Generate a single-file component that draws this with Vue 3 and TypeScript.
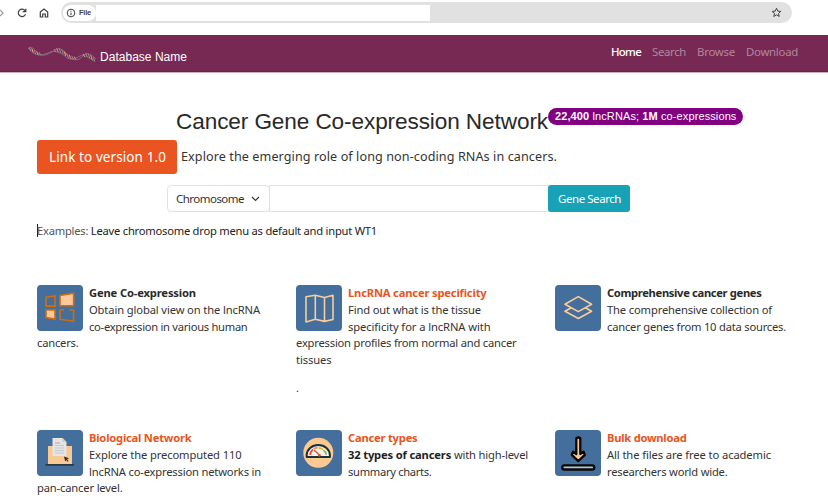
<script setup lang="ts">
import type { Directive } from 'vue'

interface Line { text: string; width: number; strong?: string }
interface Feature { icon: string; title: string; titleWidth: number; link: boolean; beside: Line[]; below: Line[]; note?: string }

// Tracks a line of text so that it fills the given measure in pixels.
const vFit: Directive<HTMLElement, number> = {
  mounted(el, { value }) {
    const count = (el.textContent ?? '').trim().length
    const natural = el.getBoundingClientRect().width
    if (count > 0) el.style.letterSpacing = `${((value - natural) / count).toFixed(4)}px`
  },
}

const nav = [
  { label: 'Home', width: 30, active: true },
  { label: 'Search', width: 34, active: false },
  { label: 'Browse', width: 38, active: false },
  { label: 'Download', width: 52, active: false },
]

const features: Feature[] = [
  {
    icon: 'windows', title: 'Gene Co-expression', titleWidth: 107, link: false,
    beside: [{ text: 'Obtain global view on the lncRNA', width: 171 }, { text: 'co-expression in various human', width: 158.5 }],
    below: [{ text: 'cancers.', width: 41.5 }],
  },
  {
    icon: 'map', title: 'LncRNA cancer specificity', titleWidth: 138.5, link: true,
    beside: [{ text: 'Find out what is the tissue', width: 133 }, { text: 'specificity for a lncRNA with', width: 142.5 }],
    below: [{ text: 'expression profiles from normal and cancer', width: 220.5 }, { text: 'tissues', width: 35.5 }],
    note: '.',
  },
  {
    icon: 'layers', title: 'Comprehensive cancer genes', titleWidth: 154.5, link: false,
    beside: [{ text: 'The comprehensive collection of', width: 165 }, { text: 'cancer genes from 10 data sources.', width: 179 }],
    below: [],
  },
  {
    icon: 'document', title: 'Biological Network', titleWidth: 102.5, link: true,
    beside: [{ text: 'Explore the precomputed 110', width: 152.5 }, { text: 'lncRNA co-expression networks in', width: 172 }],
    below: [{ text: 'pan-cancer level.', width: 85.5 }],
  },
  {
    icon: 'gauge', title: 'Cancer types', titleWidth: 69.5, link: true,
    beside: [{ strong: '32 types of cancers', text: ' with high-level', width: 180 }, { text: 'summary charts.', width: 83.5 }],
    below: [],
  },
  {
    icon: 'download', title: 'Bulk download', titleWidth: 79.5, link: true,
    beside: [{ text: 'All the files are free to academic', width: 164 }, { text: 'researchers world wide.', width: 120.5 }],
    below: [],
  },
]

// Rungs of the helix drawn in the brand mark: position, half height, colour.
const rungs: [number, number, number, string][] = [
  [3, 5, 1.8, '#a9a0a6'], [5.5, 6.5, 2, '#d9c466'], [8, 8.2, 2.2, '#d66c9d'], [10.5, 9.3, 2, '#c9b75d'], [13, 9.8, 1.6, '#78a07c'],
  [28, 6.6, 1.5, '#d66c9d'], [30.5, 6.3, 2, '#c9b75d'], [33, 6.6, 2.4, '#d66c9d'], [35.5, 7.6, 2.4, '#78a07c'], [38, 9.6, 2.2, '#e2cd6a'],
  [40.5, 11.5, 2.2, '#d66c9d'], [43, 12.8, 2, '#c9b75d'], [45.5, 13.6, 1.8, '#d66c9d'], [48, 14, 1.4, '#c9b75d'],
  [57, 11.4, 1.5, '#c9b75d'], [59.5, 11, 2, '#d66c9d'], [62, 12, 2.3, '#78a07c'], [64.5, 13.6, 2.4, '#c9b75d'], [67, 15.3, 2, '#78a07c'],
]
</script>

<template>
  <div class="page">
    <div class="toolbar">
      <svg class="forward" width="4" height="10" viewBox="0 0 4 10"><path d="M0 2l3 3-3 3" /></svg>
      <svg class="reload" width="12" height="12" viewBox="0 0 12 12"><path d="M9.5 7.2A3.7 3.7 0 1 1 9 3.6L9.7 4.5M9.8 1.7v3H6.7" /></svg>
      <svg class="home" width="12" height="12" viewBox="0 0 12 12"><path d="M2.3 5L6 2l3.7 3v5H7.3V7H4.7v3H2.3z" /></svg>
      <div class="address">
        <div class="chip">
          <svg width="10" height="10" viewBox="0 0 10 10"><circle cx="5" cy="5" r="3.8" /><path d="M5 4.5v2.7M5 2.7v1" /></svg>
          <b v-fit="12">File</b>
        </div>
        <div class="url"></div>
        <svg class="star" width="11" height="11" viewBox="0 0 11 11"><path d="M5.5 1.2l1.25 2.9 3.1.3-2.35 2.05.7 3-2.7-1.6-2.7 1.6.7-3L1.15 4.4l3.1-.3z" /></svg>
      </div>
    </div>

    <header class="navbar">
      <div class="brand">
        <svg class="dna" width="70" height="18" viewBox="0 0 70 18">
          <line v-for="r in rungs" :key="r[0]" :x1="r[0] - 0.8" :y1="r[1] - r[2]" :x2="r[0] + 0.8" :y2="r[1] + r[2]" :stroke="r[3]" />
          <path d="M1.500 4.500C4 1 8 6 11 9S18 12 24 8.500 31 3 36 6.500 41 14 47 15.500 55 12 58 10.300 64 10 69 15" />
          <path d="M1.500 4.500C5 9 10 12 16 10.500S24 7 28 7.500 35 9.500 39 13 48 15 52 12.500 58 12 62 14 65 17 68 17" />
        </svg>
        <span v-fit="87">Database Name</span>
      </div>
      <nav>
        <a v-for="item in nav" :key="item.label" v-fit="item.width" :class="{ active: item.active }">{{ item.label }}</a>
      </nav>
    </header>

    <main>
      <div class="headline">
        <h1 v-fit="372">Cancer Gene Co-expression Network</h1>
        <div class="badge"><span v-fit="181.5"><b>22,400</b> lncRNAs; <b>1M</b> co-expressions</span></div>
      </div>
      <div class="intro">
        <a class="version"><span v-fit="117">Link to version 1.0</span></a>
        <p v-fit="376">Explore the emerging role of long non-coding RNAs in cancers.</p>
      </div>
      <div class="search">
        <button class="select"><span v-fit="68">Chromosome</span>
          <svg width="9" height="6" viewBox="0 0 9 6"><path d="M1 1l3.5 3.5L8 1" /></svg>
        </button>
        <input type="text" aria-label="Gene" />
        <button class="submit"><span v-fit="63">Gene Search</span></button>
      </div>
      <div class="examples"><i></i><span v-fit="340">Examples: <em>Leave chromosome drop menu as default and input WT1</em></span></div>

      <section class="features">
        <article v-for="f in features" :key="f.title">
          <div class="top">
            <svg class="tile" viewBox="0 0 46 46" width="46" height="46">
              <g v-if="f.icon === 'windows'" class="windows">
                <path d="M9 12.200l9-1.300v10.200H9z" />
                <path class="fill" d="M23 10.500l13.600-2.200v12.500H23z" />
                <path class="fill" d="M9 25h9v9l-9-1.400z" />
                <path d="M27 25h-4v9.300l13.600 1.900V25h-4" />
              </g>
              <g v-else-if="f.icon === 'map'" class="outline">
                <path d="M10 11.700l9.300-1.500 9.200 2.300 8.500-2.300v24.300l-8.500 1.900-9.200-2.200-9.300 2.700zM19.300 10.200v24M28.500 12.500v23.900" />
              </g>
              <g v-else-if="f.icon === 'layers'" class="outline">
                <path d="M10 19.300l13.300-7.700 13.300 7.700-13.300 7.300z" />
                <path d="M16.300 22.800L10 26.300l13.300 7.200 13.300-7.200-6.300-3.500" />
              </g>
              <g v-else-if="f.icon === 'document'">
                <path d="M11 16h24v18H11z" fill="#f9c994" />
                <path d="M15.500 8h10l4 4v14h-14z" fill="#e4e6e6" />
                <path d="M25.500 8v4h4z" fill="#c4cdd1" />
                <path d="M18 13h5" stroke="#e57b70" stroke-width=".8" />
                <path d="M18 15.500h9M18 18h9M18 20.500h9M18 23h9" stroke="#bbc2c4" stroke-width=".8" />
                <path d="M8.500 34h28.500v1.800H8.500z" fill="#263944" />
                <path d="M27 26.500l5 1.800-2 .9 1.600 1.800-.9.7-1.500-1.800-1 1.700z" fill="#29323a" />
              </g>
              <g v-else-if="f.icon === 'gauge'">
                <circle cx="22.3" cy="22.8" r="15" fill="#fdc990" />
                <path d="M10.700 27v-1.700a11.600 10.200 0 0 1 23.200 0V27z" fill="#f5f3e9" stroke="#183039" stroke-width="2" stroke-linejoin="round" />
                <g fill="none" stroke-width="1.7">
                  <path d="M14.200 25a8 7.200 0 0 1 3-5.600" stroke="#e84c32" />
                  <path d="M17.700 19a8 7 0 0 1 4-1.300" stroke="#e88c63" />
                  <path d="M22.500 17.800a8 7 0 0 1 4.400 1.600" stroke="#f0b622" />
                  <path d="M27.400 20a8 7 0 0 1 2.800 4.600" stroke="#83bd45" />
                </g>
                <path d="M18.200 20.300l5.600 5" stroke="#dc5143" stroke-width="1.5" />
                <circle cx="23.4" cy="25.3" r="1.4" fill="#dc5143" />
              </g>
              <g v-else class="download">
                <path class="arrow" d="M21.300 9.200q0-1.700 2-1.700t2 1.700V24l3.300-2.300 1.200 3.200-6.500 6.200-6.500-6.200 1.200-3.200 3.300 2.300z" />
                <rect x="7.3" y="35.3" width="32" height="4.2" rx="2.1" />
              </g>
            </svg>
            <div class="copy">
              <h2 v-fit="f.titleWidth" :class="{ link: f.link }">{{ f.title }}</h2>
              <span v-for="l in f.beside" :key="l.text" v-fit="l.width"><b v-if="l.strong">{{ l.strong }}</b>{{ l.text }}</span>
            </div>
          </div>
          <div class="copy">
            <span v-for="l in f.below" :key="l.text" v-fit="l.width">{{ l.text }}</span>
            <span v-if="f.note" class="note">{{ f.note }}</span>
          </div>
        </article>
      </section>
    </main>
  </div>
</template>

<style>
body { background: #fff; overflow: hidden; }
</style>

<style scoped>
.page { width: 828px; height: 496px; overflow: hidden; font-family: "Noto Sans", "Open Sans", sans-serif; font-size: 11.2px; color: #333; background: #fff; }
.page * { box-sizing: border-box; }
svg { display: block; flex: none; }
span, h1, h2, p, nav a { white-space: nowrap; }
.toolbar { display: flex; align-items: center; height: 35px; padding-bottom: 10px; }
.toolbar path, .toolbar circle { fill: none; stroke: #3c3f43; stroke-width: 1.2; }
.toolbar .forward path { stroke: #999; }
.reload { margin-left: 12px; }
.home { margin-left: 10px; }
.address { display: flex; align-items: center; width: 731px; height: 21px; margin-left: 11px; padding: 0 10px 0 2px; border-radius: 11px; background: #e1e1e1; }
.chip { display: flex; align-items: center; gap: 3px; width: 33px; height: 16px; padding-left: 3px; border-radius: 8px; background: #fff; font-family: "Liberation Sans", Arial, sans-serif; font-size: 7.5px; color: #444; }
.chip path, .chip circle { stroke-width: 1; }
.url { width: 334px; height: 16px; background: #fff; }
.star { margin-left: auto; }
.star path { stroke-width: 1; stroke: #444; }
.navbar { display: flex; justify-content: space-between; height: 38px; padding: 0 30px 0 27px; background: #772953; border-bottom: 1px solid #cbb3c0; box-shadow: inset 0 -1px #682448; }
.brand { display: flex; align-items: flex-start; gap: 3px; padding-top: 9px; color: #fff; font: 12px/26px "Liberation Sans", Arial, sans-serif; }
.dna path { fill: none; stroke: #8c8791; stroke-width: .7; }
.dna line { stroke-width: 1; }
nav { display: flex; gap: 11px; font-size: 11.4px; line-height: 34px; color: #b386a0; }
nav .active { color: #fff; font-weight: 500; }
main { padding: 33px 37px 0; }
.headline { display: flex; align-items: flex-start; padding-left: 139px; height: 34px; }
h1 { margin: 0; font: 400 22.6px/31px "Liberation Sans", Arial, sans-serif; color: #292929; }
.badge { width: 195px; height: 17px; margin-top: 2px; padding-left: 7px; border-radius: 9px; background: #800080; color: #fff; font: 11px/17px "Liberation Sans", Arial, sans-serif; }
.intro { display: flex; gap: 4px; height: 45px; }
.version { width: 140px; height: 34px; padding-left: 12px; border-radius: 3px; background: #e95420; color: #fff; font-size: 13.5px; line-height: 34px; }
.intro p { margin: 0; font-size: 12.6px; line-height: 33px; }
.search { display: flex; height: 27px; padding-left: 130px; }
.search button, .search input { height: 27px; margin: 0; font: 11.5px/25px "Noto Sans", sans-serif; color: #333; }
.select { display: flex; align-items: center; width: 103px; padding: 0 8px; justify-content: space-between; border: 1px solid #dee2e6; border-radius: 4px; background: #fff; }
.select svg { margin-right: 1px; }
.select path { fill: none; stroke: #343a40; stroke-width: 1.2; }
.search input { width: 280px; margin-left: -1px; border: 1px solid #dee2e6; outline: 0; }
.search .submit { width: 82px; margin-left: -1px; padding: 0 0 0 10px; text-align: left; border: 0; border-radius: 3px; background: #17a2b8; color: #fff; }
.examples { display: flex; align-items: center; height: 18px; margin-top: 9px; color: #555; }
.examples i { width: 1px; height: 13px; margin-right: -1px; background: #222; }
.examples em { font-style: normal; color: #222; }
.features { display: grid; grid-template-columns: repeat(3, 259px); grid-template-rows: 145px auto; margin-top: 46px; }
.top { display: flex; gap: 6px; }
.tile { border-radius: 4px; background: #446e9b; }
.copy { display: flex; flex-direction: column; align-items: flex-start; line-height: 16.8px; }
h2 { margin: 0; font-size: 11.2px; line-height: 16.8px; font-weight: 700; color: #292929; }
.copy b { color: #222; }
h2.link { color: #e95420; }
.note { margin-top: 11px; }
.windows path { fill: none; stroke: #d16d0c; stroke-width: 1.6; }
.windows .fill { fill: #ffc99c; }
.outline path { fill: none; stroke: #f9cd9b; stroke-width: 1.6; stroke-linejoin: round; }
.download path, .download rect { stroke: #080808; stroke-width: 2.3; stroke-linejoin: round; }
.download .arrow { fill: #fdcb92; }
.download rect { fill: #b4c4cc; }
</style>
